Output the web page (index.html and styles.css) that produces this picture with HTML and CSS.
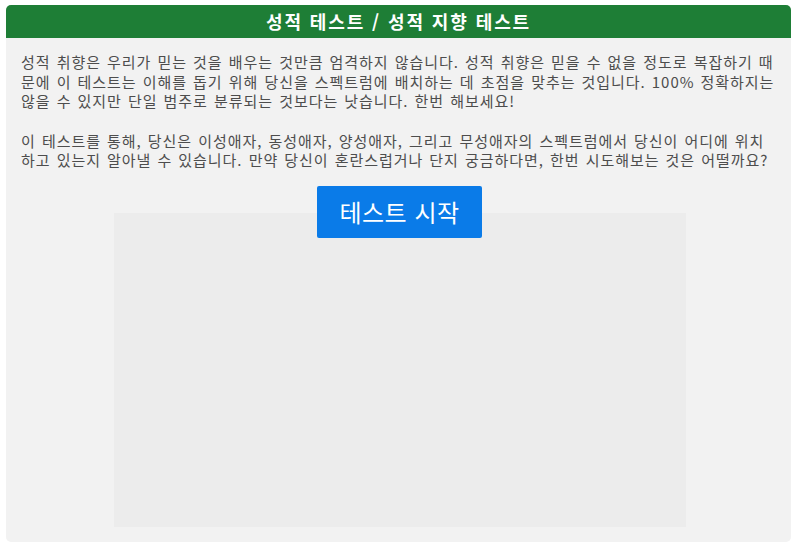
FILE: index.html
```html
<!DOCTYPE html>
<html lang="ko">
<head>
<meta charset="utf-8">
<title>성적 테스트 / 성적 지향 테스트</title>
<link rel="stylesheet" href="styles.css">
</head>
<body>
<div class="card">
  <h1 class="card-title">성적 테스트 / 성적 지향 테스트</h1>
  <div class="card-body">
    <p class="intro">성적 취향은 우리가 믿는 것을 배우는 것만큼 엄격하지 않습니다. 성적 취향은 믿을 수 없을 정도로 복잡하기 때문에 이 테스트는 이해를 돕기 위해 당신을 스펙트럼에 배치하는 데 초점을 맞추는 것입니다. 100% 정확하지는 않을 수 있지만 단일 범주로 분류되는 것보다는 낫습니다. 한번 해보세요!</p>
    <p class="intro">이 테스트를 통해, 당신은 이성애자, 동성애자, 양성애자, 그리고 무성애자의 스펙트럼에서 당신이 어디에 위치하고 있는지 알아낼 수 있습니다. 만약 당신이 혼란스럽거나 단지 궁금하다면, 한번 시도해보는 것은 어떨까요?</p>
    <div class="start">
      <button class="start-btn" type="button">테스트 시작</button>
      <div class="media-slot"></div>
    </div>
  </div>
</div>
</body>
</html>
```
FILE: styles.css
```css
html, body {
  margin: 0;
  padding: 0;
  background: #ffffff;
}

body {
  padding: 5px 9px 8px 6px;
  font-family: "Malgun Gothic", "Noto Sans CJK KR", "Noto Sans", sans-serif;
  color: #4d4d4d;
}

.card {
  background: #f2f2f2;
  border-radius: 5px;
  overflow: hidden;
}

.card-title {
  margin: 0;
  height: 33px;
  background: #1e7e36;
  color: #ffffff;
  font-size: 18px;
  font-weight: 700;
  letter-spacing: 1.9px;
  line-height: 33px;
  text-align: center;
}

.card-body {
  padding: 14px 13px 15px 15px;
}

.intro {
  margin: 0 0 20px 0;
  font-size: 15px;
  line-height: 19.6px;
  letter-spacing: 0.95px;
  word-spacing: 1px;
}

.intro + .intro {
  margin-bottom: 0;
}

.start {
  display: flex;
  flex-direction: column;
  align-items: center;
  padding-top: 16px;
}

.start-btn {
  position: relative;
  z-index: 1;
  width: 165px;
  height: 52px;
  border: 0;
  border-radius: 2px;
  background: #0a7be8;
  color: #ffffff;
  font-family: inherit;
  font-size: 24px;
  letter-spacing: 0.5px;
  line-height: 52px;
  padding: 0;
  cursor: pointer;
}

.media-slot {
  width: 572px;
  height: 314px;
  margin-top: -25px;
  background: #ececec;
}
```
